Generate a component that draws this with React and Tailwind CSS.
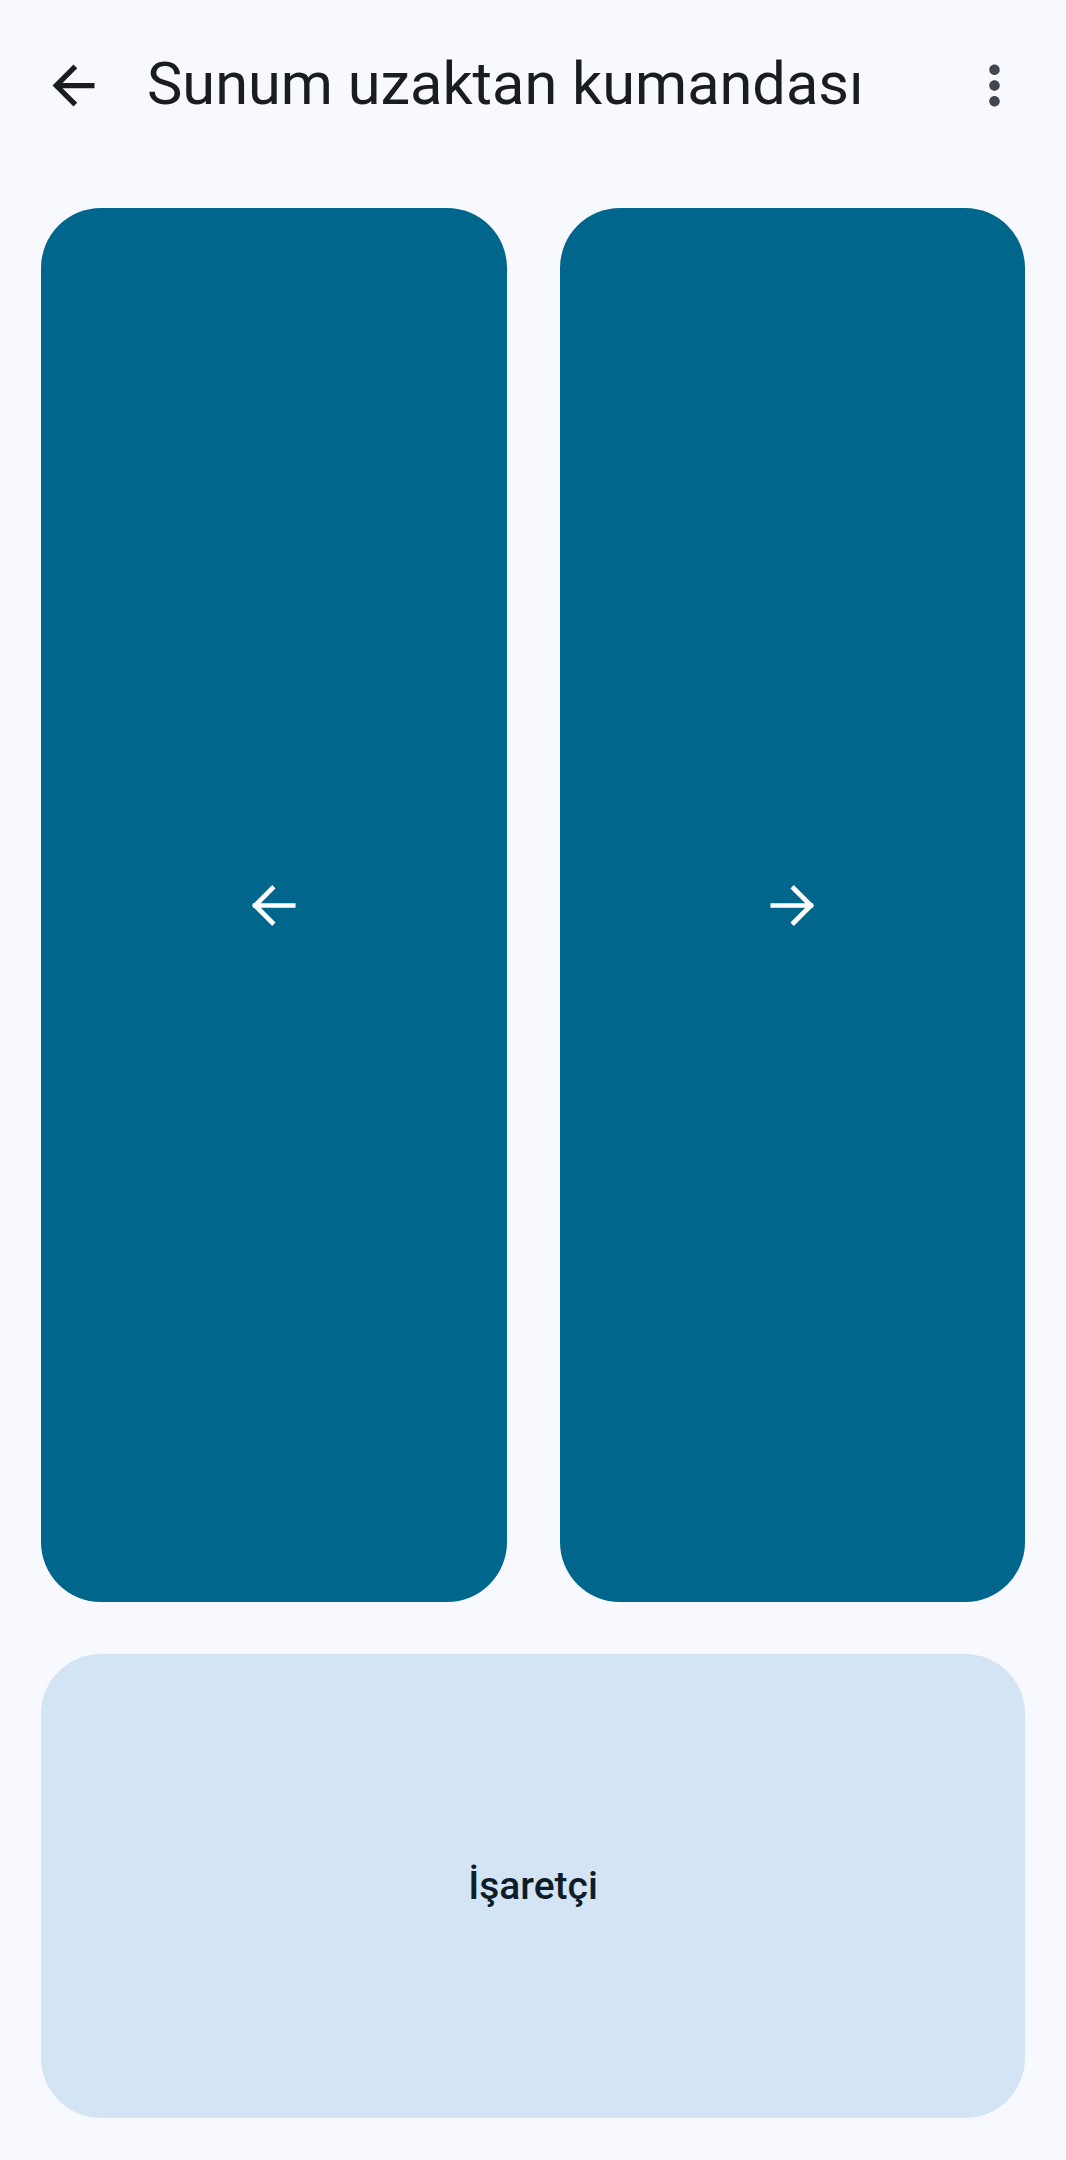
import React from 'react';

// Presentation remote screen: two big slide buttons and a pointer pad
const BackIcon = () => (
    <svg viewBox="0 0 24 24" className="w-[63px] h-[63px] shrink-0" fill="#191c20">
        <path d="M20 11H7.83l5.59-5.59L12 4l-8 8 8 8 1.41-1.41L7.83 13H20v-2z" />
    </svg>
);

const MoreIcon = () => (
    <svg viewBox="0 0 24 24" className="w-[63px] h-[63px] shrink-0" fill="#42474e">
        <path d="M12 8c1.1 0 2-.9 2-2s-.9-2-2-2-2 .9-2 2 .9 2 2 2zm0 2c-1.1 0-2 .9-2 2s.9 2 2 2 2-.9 2-2-.9-2-2-2zm0 6c-1.1 0-2 .9-2 2s.9 2 2 2 2-.9 2-2-.9-2-2-2z" />
    </svg>
);

const SlideArrow = ({ dir }) => (
    <svg viewBox="0 0 24 24" className="w-[63px] h-[63px]" fill="none" stroke="#ffffff" strokeWidth="1.8" strokeLinecap="square">
        {dir === 'left' ? (
            <path d="M19.5 12H5M11.5 5.5L5 12l6.5 6.5" />
        ) : (
            <path d="M4.5 12H19M12.5 5.5L19 12l-6.5 6.5" />
        )}
    </svg>
);

const App = () => {
    return (
        <div className="min-h-[2160px] bg-[#f7f9ff]" style={{ fontFamily: 'Roboto, "Noto Sans", sans-serif' }}>
            {/* --- Top app bar --- */}
            <div className="h-[170px] flex items-center pl-[42px] pr-[40px]">
                <BackIcon />
                <h1 className="ml-[42px] flex-1 text-[59.5px] leading-none text-[#191c20] font-normal">Sunum uzaktan kumandası</h1>
                <MoreIcon />
            </div>

            {/* --- Controls --- */}
            <div className="flex flex-col gap-[52px] px-[41px] pt-[38px] pb-[42px]">
                <div className="grid grid-cols-2 gap-[53px] h-[1394px]">
                    <button className="rounded-[60px] bg-[#00668b] flex items-center justify-center">
                        <SlideArrow dir="left" />
                    </button>
                    <button className="rounded-[60px] bg-[#00668b] flex items-center justify-center">
                        <SlideArrow dir="right" />
                    </button>
                </div>
                <button className="h-[464px] rounded-[60px] bg-[#d3e5f4] flex items-center justify-center">
                    <span className="text-[39px] font-medium text-[#0f1d2a]">İşaretçi</span>
                </button>
            </div>
        </div>
    );
};

export default App;
